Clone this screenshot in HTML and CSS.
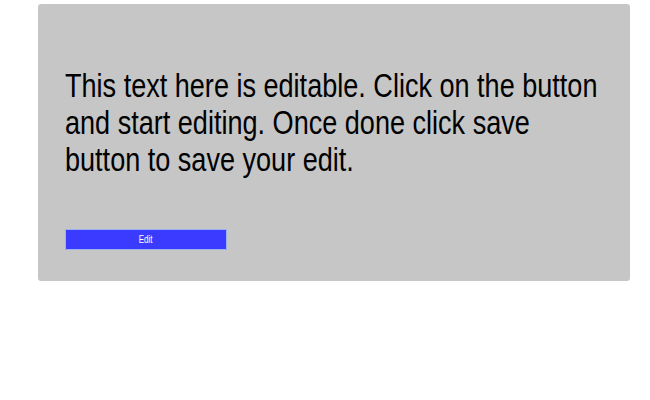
FILE: index.html
```html
<!DOCTYPE html>
<html>
<head>
<meta charset="utf-8">
<link rel="stylesheet" href="styles.css">
</head>
<body>
<div class="card">
  <p class="text">This text here is editable. Click on the button and start editing. Once done click save button to save your edit.</p>
  <button class="edit-btn"><span class="btn-label">Edit</span></button>
</div>
</body>
</html>
```
FILE: styles.css
```css
html, body {
  margin: 0;
  padding: 0;
  background: #ffffff;
}
body {
  padding: 4px 20px 0 38px;
  font-family: "Liberation Sans", Arial, sans-serif;
}
.card {
  width: 592px;
  height: 277px;
  box-sizing: border-box;
  background: #c6c6c6;
  border-radius: 3px;
  padding: 63px 0 0 27px;
  display: flex;
  flex-direction: column;
  align-items: flex-start;
  overflow: hidden;
}
.text {
  margin: 0;
  font-size: 33px;
  line-height: 37px;
  color: #000;
  width: 660px;
  transform: scaleX(0.82);
  transform-origin: left top;
}
.edit-btn {
  margin-top: 51px;
  width: 162px;
  height: 21px;
  box-sizing: border-box;
  background: #3b3bff;
  border: 1px solid #9ab2f2;
  border-radius: 1px;
  color: #fff;
  font-family: "Liberation Sans", Arial, sans-serif;
  font-size: 10px;
  padding: 0;
  display: flex;
  align-items: center;
  justify-content: center;
}
.btn-label {
  display: inline-block;
  transform: scaleX(0.8);
}
```
